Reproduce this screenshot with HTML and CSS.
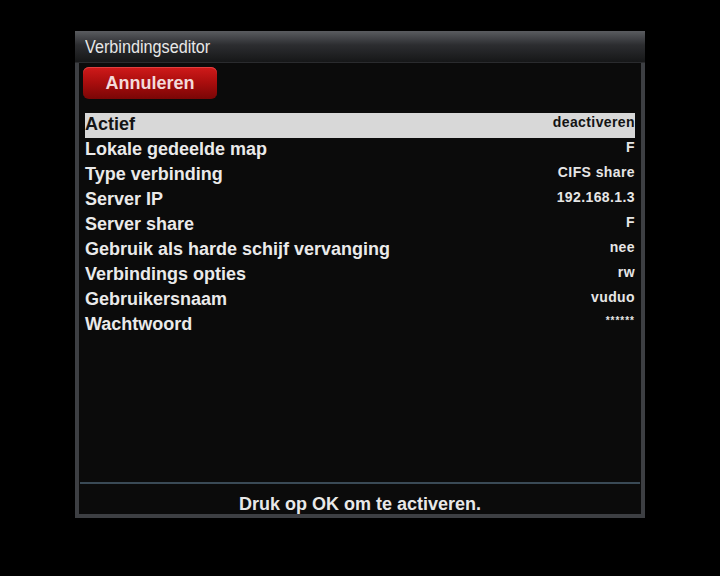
FILE: index.html
```html
<!DOCTYPE html>
<html lang="nl">
<head>
    <meta charset="UTF-8">
    <title>Verbindingseditor</title>
    <link rel="stylesheet" href="styles.css">
</head>
<body>
    <div class="window">
        <div class="titlebar"><span class="title">Verbindingseditor</span></div>
        <div class="content">
            <div class="buttons">
                <span class="button red">Annuleren</span>
            </div>
            <div class="list">
                <div class="row selected"><span class="label">Actief</span><span class="value">deactiveren</span></div>
                <div class="row"><span class="label">Lokale gedeelde map</span><span class="value">F</span></div>
                <div class="row"><span class="label">Type verbinding</span><span class="value">CIFS share</span></div>
                <div class="row"><span class="label">Server IP</span><span class="value">192.168.1.3</span></div>
                <div class="row"><span class="label">Server share</span><span class="value">F</span></div>
                <div class="row"><span class="label">Gebruik als harde schijf vervanging</span><span class="value">nee</span></div>
                <div class="row"><span class="label">Verbindings opties</span><span class="value">rw</span></div>
                <div class="row"><span class="label">Gebruikersnaam</span><span class="value">vuduo</span></div>
                <div class="row"><span class="label">Wachtwoord</span><span class="value small">******</span></div>
            </div>
        </div>
        <div class="footer">Druk op OK om te activeren.</div>
    </div>
</body>
</html>
```

FILE: styles.css
```css
body {
    margin: 0;
    background: #000;
    font-family: "Liberation Sans", Arial, sans-serif;
    color: #e6e6e6;
}
.window {
    box-sizing: border-box;
    width: 570px;
    height: 487px;
    margin: 31px 0 0 75px;
    border: 4px solid #3d3f43;
    border-top: none;
    background: #0b0b0b;
    display: flex;
    flex-direction: column;
}
.titlebar {
    height: 31px;
    margin: 0 -4px;
    padding: 0 10px;
    background: linear-gradient(#5a5c60, #2c2d30 45%, #161718);
    border-bottom: 1px solid #2a2b2e;
}
.title {
    display: inline-block;
    font-size: 18px;
    line-height: 32px;
    color: #e8e8e8;
    transform: scaleX(0.9);
    transform-origin: left;
}
.content {
    flex: 1;
    padding: 4px 0 0 4px;
}
.buttons {
    display: flex;
}
.button {
    width: 134px;
    height: 32px;
    border-radius: 6px;
    font-weight: bold;
    font-size: 18px;
    line-height: 32px;
    text-align: center;
}
.red {
    background: linear-gradient(#d01a1a, #a80d0d 50%, #7a0606);
    color: #f3dada;
    box-shadow: inset 0 1px 0 #e04040;
}
.list {
    margin: 14px 6px 0 2px;
}
.row {
    display: flex;
    justify-content: space-between;
    height: 25px;
}
.label {
    font-weight: bold;
    font-size: 18px;
    line-height: 22px;
    color: #eaeaea;
}
.value {
    font-weight: bold;
    font-size: 14px;
    line-height: 18px;
    letter-spacing: 0.4px;
    color: #e6e6e6;
}
.value.small {
    font-size: 10px;
    line-height: 16px;
    letter-spacing: 1px;
}
.selected {
    background: #d8d8d8;
}
.selected .label,
.selected .value {
    color: #141414;
}
.footer {
    height: 30px;
    margin: 0 1px;
    border-top: 2px solid #3a4a56;
    font-weight: bold;
    font-size: 18px;
    line-height: 40px;
    text-align: center;
    color: #e8e8e8;
}
```
